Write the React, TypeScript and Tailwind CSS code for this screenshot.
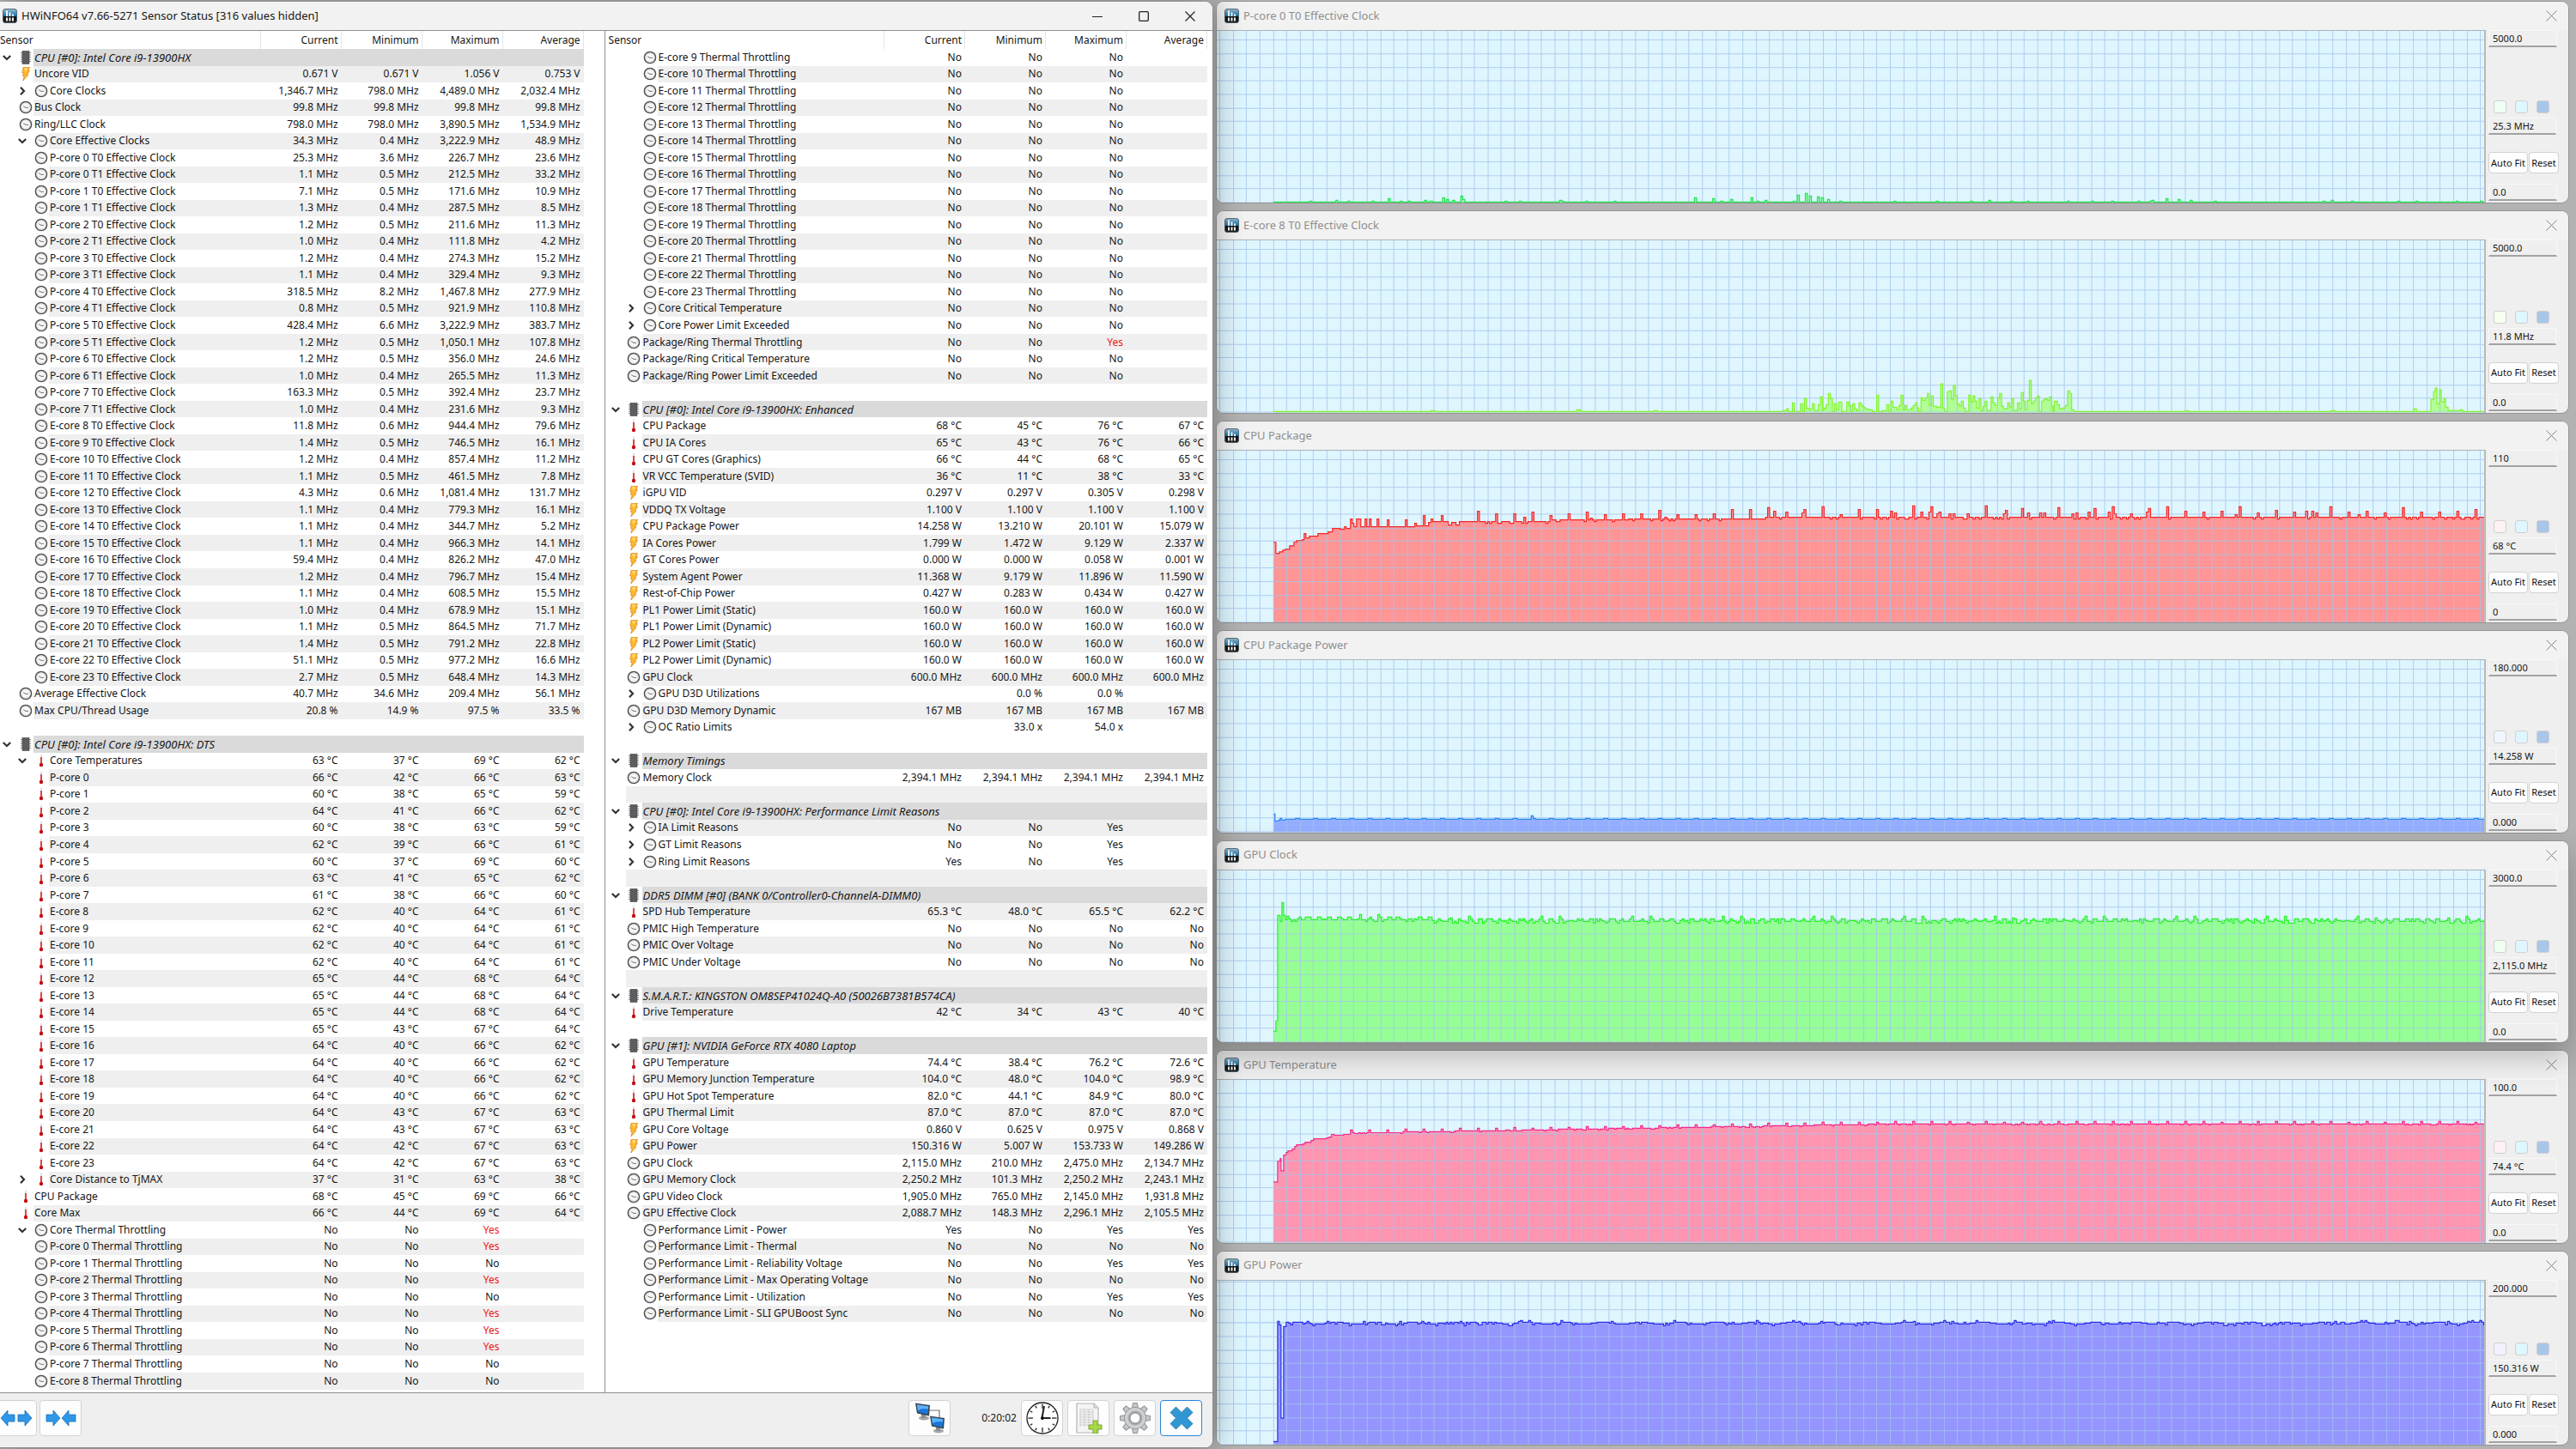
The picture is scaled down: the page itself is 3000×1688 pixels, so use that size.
import clsx from "clsx";
import type { ReactNode } from "react";

type IconName = "chip" | "bolt" | "clock" | "temp";
type RowKind = "group" | "item" | "open" | "closed" | "sub" | "blank";

interface Row {
    kind: RowKind;
    icon: IconName;
    name: string;
    values: string[];
    shaded?: boolean;
}

const row = (kind: RowKind, icon: IconName, name: string, values = "", unit = "", shaded?: boolean): Row => ({
    kind,
    icon,
    name,
    values: values ? values.split(" ").map((v) => (v === "-" ? "" : unit ? `${v} ${unit}` : v)) : [],
    shaded,
});

const group = (name: string) => row("group", "chip", name);
const blank = (shaded?: boolean) => row("blank", "chip", "", "", "", shaded);

const effectiveClocks = [
    "25.3 3.6 226.7 23.6",
    "1.1 0.5 212.5 33.2",
    "7.1 0.5 171.6 10.9",
    "1.3 0.4 287.5 8.5",
    "1.2 0.5 211.6 11.3",
    "1.0 0.4 111.8 4.2",
    "1.2 0.4 274.3 15.2",
    "1.1 0.4 329.4 9.3",
    "318.5 8.2 1,467.8 277.9",
    "0.8 0.5 921.9 110.8",
    "428.4 6.6 3,222.9 383.7",
    "1.2 0.5 1,050.1 107.8",
    "1.2 0.5 356.0 24.6",
    "1.0 0.4 265.5 11.3",
    "163.3 0.5 392.4 23.7",
    "1.0 0.4 231.6 9.3",
].map((values, i) => row("sub", "clock", `P-core ${Math.floor(i / 2)} T${i % 2} Effective Clock`, values, "MHz"));

const eCoreClocks = [
    "11.8 0.6 944.4 79.6",
    "1.4 0.5 746.5 16.1",
    "1.2 0.4 857.4 11.2",
    "1.1 0.5 461.5 7.8",
    "4.3 0.6 1,081.4 131.7",
    "1.1 0.4 779.3 16.1",
    "1.1 0.4 344.7 5.2",
    "1.1 0.4 966.3 14.1",
    "59.4 0.4 826.2 47.0",
    "1.2 0.4 796.7 15.4",
    "1.1 0.4 608.5 15.5",
    "1.0 0.4 678.9 15.1",
    "1.1 0.5 864.5 71.7",
    "1.4 0.5 791.2 22.8",
    "51.1 0.5 977.2 16.6",
    "2.7 0.5 648.4 14.3",
].map((values, i) => row("sub", "clock", `E-core ${i + 8} T0 Effective Clock`, values, "MHz"));

const coreTemps = [
    "66 42 66 63",
    "60 38 65 59",
    "64 41 66 62",
    "60 38 63 59",
    "62 39 66 61",
    "60 37 69 60",
    "63 41 65 62",
    "61 38 66 60",
    "62 40 64 61",
    "62 40 64 61",
    "62 40 64 61",
    "62 40 64 61",
    "65 44 68 64",
    "65 44 68 64",
    "65 44 68 64",
    "65 43 67 64",
    "64 40 66 62",
    "64 40 66 62",
    "64 40 66 62",
    "64 40 66 62",
    "64 43 67 63",
    "64 43 67 63",
    "64 42 67 63",
    "64 42 67 63",
].map((values, i) => row("sub", "temp", `${i < 8 ? "P" : "E"}-core ${i}`, values, "°C"));

const hotCores = [0, 2, 4, 5, 6];

const leftRows: Row[] = [
    group("CPU [#0]: Intel Core i9-13900HX"),
    row("item", "bolt", "Uncore VID", "0.671 0.671 1.056 0.753", "V"),
    row("closed", "clock", "Core Clocks", "1,346.7 798.0 4,489.0 2,032.4", "MHz"),
    row("item", "clock", "Bus Clock", "99.8 99.8 99.8 99.8", "MHz"),
    row("item", "clock", "Ring/LLC Clock", "798.0 798.0 3,890.5 1,534.9", "MHz"),
    row("open", "clock", "Core Effective Clocks", "34.3 0.4 3,222.9 48.9", "MHz"),
    ...effectiveClocks,
    ...eCoreClocks,
    row("item", "clock", "Average Effective Clock", "40.7 34.6 209.4 56.1", "MHz"),
    row("item", "clock", "Max CPU/Thread Usage", "20.8 14.9 97.5 33.5", "%"),
    blank(),
    group("CPU [#0]: Intel Core i9-13900HX: DTS"),
    row("open", "temp", "Core Temperatures", "63 37 69 62", "°C"),
    ...coreTemps,
    row("closed", "temp", "Core Distance to TjMAX", "37 31 63 38", "°C"),
    row("item", "temp", "CPU Package", "68 45 69 66", "°C"),
    row("item", "temp", "Core Max", "66 44 69 64", "°C"),
    row("open", "clock", "Core Thermal Throttling", "No No Yes"),
    ...Array.from({ length: 9 }, (_, i) =>
        row("sub", "clock", `${i < 8 ? "P" : "E"}-core ${i} Thermal Throttling`, hotCores.includes(i) ? "No No Yes" : "No No No"),
    ),
];

const rightRows: Row[] = [
    ...Array.from({ length: 15 }, (_, i) => row("sub", "clock", `E-core ${i + 9} Thermal Throttling`, "No No No")),
    row("closed", "clock", "Core Critical Temperature", "No No No"),
    row("closed", "clock", "Core Power Limit Exceeded", "No No No"),
    row("item", "clock", "Package/Ring Thermal Throttling", "No No Yes"),
    row("item", "clock", "Package/Ring Critical Temperature", "No No No"),
    row("item", "clock", "Package/Ring Power Limit Exceeded", "No No No"),
    blank(),
    group("CPU [#0]: Intel Core i9-13900HX: Enhanced"),
    row("item", "temp", "CPU Package", "68 45 76 67", "°C"),
    row("item", "temp", "CPU IA Cores", "65 43 76 66", "°C"),
    row("item", "temp", "CPU GT Cores (Graphics)", "66 44 68 65", "°C"),
    row("item", "temp", "VR VCC Temperature (SVID)", "36 11 38 33", "°C"),
    row("item", "bolt", "iGPU VID", "0.297 0.297 0.305 0.298", "V"),
    row("item", "bolt", "VDDQ TX Voltage", "1.100 1.100 1.100 1.100", "V"),
    row("item", "bolt", "CPU Package Power", "14.258 13.210 20.101 15.079", "W"),
    row("item", "bolt", "IA Cores Power", "1.799 1.472 9.129 2.337", "W"),
    row("item", "bolt", "GT Cores Power", "0.000 0.000 0.058 0.001", "W"),
    row("item", "bolt", "System Agent Power", "11.368 9.179 11.896 11.590", "W"),
    row("item", "bolt", "Rest-of-Chip Power", "0.427 0.283 0.434 0.427", "W"),
    row("item", "bolt", "PL1 Power Limit (Static)", "160.0 160.0 160.0 160.0", "W"),
    row("item", "bolt", "PL1 Power Limit (Dynamic)", "160.0 160.0 160.0 160.0", "W"),
    row("item", "bolt", "PL2 Power Limit (Static)", "160.0 160.0 160.0 160.0", "W"),
    row("item", "bolt", "PL2 Power Limit (Dynamic)", "160.0 160.0 160.0 160.0", "W"),
    row("item", "clock", "GPU Clock", "600.0 600.0 600.0 600.0", "MHz"),
    row("closed", "clock", "GPU D3D Utilizations", "- 0.0 0.0 -", "%"),
    row("item", "clock", "GPU D3D Memory Dynamic", "167 167 167 167", "MB"),
    row("closed", "clock", "OC Ratio Limits", "- 33.0 54.0 -", "x"),
    blank(false),
    group("Memory Timings"),
    row("item", "clock", "Memory Clock", "2,394.1 2,394.1 2,394.1 2,394.1", "MHz", false),
    blank(true),
    group("CPU [#0]: Intel Core i9-13900HX: Performance Limit Reasons"),
    row("closed", "clock", "IA Limit Reasons", "No No Yes", "", true),
    row("closed", "clock", "GT Limit Reasons", "No No Yes", "", false),
    row("closed", "clock", "Ring Limit Reasons", "Yes No Yes"),
    blank(),
    group("DDR5 DIMM [#0] (BANK 0/Controller0-ChannelA-DIMM0)"),
    row("item", "temp", "SPD Hub Temperature", "65.3 48.0 65.5 62.2", "°C"),
    row("item", "clock", "PMIC High Temperature", "No No No No"),
    row("item", "clock", "PMIC Over Voltage", "No No No No"),
    row("item", "clock", "PMIC Under Voltage", "No No No No"),
    blank(),
    group("S.M.A.R.T.: KINGSTON OM8SEP41024Q-A0 (50026B7381B574CA)"),
    row("item", "temp", "Drive Temperature", "42 34 43 40", "°C"),
    blank(),
    group("GPU [#1]: NVIDIA GeForce RTX 4080 Laptop"),
    row("item", "temp", "GPU Temperature", "74.4 38.4 76.2 72.6", "°C"),
    row("item", "temp", "GPU Memory Junction Temperature", "104.0 48.0 104.0 98.9", "°C"),
    row("item", "temp", "GPU Hot Spot Temperature", "82.0 44.1 84.9 80.0", "°C"),
    row("item", "temp", "GPU Thermal Limit", "87.0 87.0 87.0 87.0", "°C"),
    row("item", "bolt", "GPU Core Voltage", "0.860 0.625 0.975 0.868", "V"),
    row("item", "bolt", "GPU Power", "150.316 5.007 153.733 149.286", "W"),
    row("item", "clock", "GPU Clock", "2,115.0 210.0 2,475.0 2,134.7", "MHz"),
    row("item", "clock", "GPU Memory Clock", "2,250.2 101.3 2,250.2 2,243.1", "MHz"),
    row("item", "clock", "GPU Video Clock", "1,905.0 765.0 2,145.0 1,931.8", "MHz"),
    row("item", "clock", "GPU Effective Clock", "2,088.7 148.3 2,296.1 2,105.5", "MHz"),
    row("sub", "clock", "Performance Limit - Power", "Yes No Yes Yes"),
    row("sub", "clock", "Performance Limit - Thermal", "No No No No"),
    row("sub", "clock", "Performance Limit - Reliability Voltage", "No No Yes Yes"),
    row("sub", "clock", "Performance Limit - Max Operating Voltage", "No No No No"),
    row("sub", "clock", "Performance Limit - Utilization", "No No Yes Yes"),
    row("sub", "clock", "Performance Limit - SLI GPUBoost Sync", "No No No No"),
    blank(false),
    blank(false),
    blank(false),
    blank(false),
];

const SensorIcon = ({ name }: { name: IconName }) => {
    if (name === "chip") {
        return (
            <svg viewBox="0 0 16 16" className="mx-auto block size-4">
                <path d="M2 2.5h12M2 5h12M2 7.5h12M2 10h12M2 12.5h12" stroke="#8a8a8a" strokeWidth="1" />
                <rect x="4" y="0.5" width="8" height="15" fill="#5c5d60" stroke="#444" strokeWidth="0.6" />
            </svg>
        );
    }
    if (name === "bolt") {
        return (
            <svg viewBox="0 0 16 16" className="mx-auto block size-4">
                <path d="M5 0.5 12.5 0 11 4.5h1.5L9.5 9.5h1.3L4.8 16l1.5-5.5H4.5L5.5 7H3.8z" fill="#fdb92a" stroke="#e08a2c" strokeWidth="0.8" />
                <path d="M6 1.5 10 1.2 8 6z" fill="#ffe27a" />
            </svg>
        );
    }
    if (name === "temp") {
        return (
            <svg viewBox="0 0 16 16" className="mx-auto block size-4">
                <rect x="6.8" y="0.5" width="2.4" height="13" rx="1.2" fill="#e4e4e4" />
                <rect x="7.2" y="4" width="1.6" height="8" fill="#e02020" />
                <circle cx="8" cy="13" r="2.2" fill="#c40d12" />
            </svg>
        );
    }
    return (
        <svg viewBox="0 0 16 16" className="mx-auto block size-4">
            <circle cx="8" cy="8" r="6.6" fill="#f0f0f0" stroke="#505050" strokeWidth="1.5" />
            <circle cx="8" cy="8" r="5.2" fill="#f6f6f6" stroke="#cfcfcf" strokeWidth="0.7" />
            <path d="M5.2 6.8 8 8.4h3" fill="none" stroke="#775" strokeWidth="1" />
        </svg>
    );
};

const Toggle = ({ open, label, className }: { open: boolean; label: string; className: string }) => (
    <button type="button" aria-label={label} aria-expanded={open} className={clsx("block", className)}>
        <svg viewBox="0 0 10 10" className="size-[10px]" fill="none" stroke="#333" strokeWidth="2.2">
            <path d={open ? "M0.8 3 5 7 9.2 3" : "M3 0.8 7 5 3 9.2"} />
        </svg>
    </button>
);

const SensorTable = ({ rows }: { rows: Row[] }) => (
    <table className="h-full w-full table-fixed border-separate border-spacing-0 text-left leading-4 whitespace-nowrap">
        <colgroup>
            <col className="w-5" />
            <col className="w-[19px]" />
            <col className="w-[18px]" />
            <col />
            <col className="w-[94px]" />
            <col className="w-[94px]" />
            <col className="w-[94px]" />
            <col className="w-[94px]" />
        </colgroup>
        <thead>
            <tr>
                <th colSpan={4} className="h-[21px] border-r border-[#e5e5e5] p-0 font-normal">
                    Sensor
                </th>
                {["Current", "Minimum", "Maximum", "Average"].map((title) => (
                    <th key={title} className="border-r border-[#e5e5e5] p-0 pr-[3px] text-right font-normal">
                        {title}
                    </th>
                ))}
            </tr>
        </thead>
        <tbody>
            {rows.map((r, i) => {
                const nested = r.kind === "sub" || r.kind === "open" || r.kind === "closed";
                const shade = r.kind === "group" ? "bg-[#dadada]" : (r.shaded ?? i % 2 === 1) ? "bg-[#efefef]" : "";
                if (r.kind === "blank") {
                    return (
                        <tr key={i}>
                            <td className="p-0">&nbsp;</td>
                            <td colSpan={7} className={clsx("p-0", shade)} />
                        </tr>
                    );
                }
                return (
                    <tr key={i}>
                        <td className="p-0">{r.kind === "group" && <Toggle open label={r.name} className="ml-[3px]" />}</td>
                        {nested && (
                            <td className="p-0">
                                {r.kind !== "sub" && <Toggle open={r.kind === "open"} label={r.name} className="ml-px" />}
                            </td>
                        )}
                        <td className="p-0">
                            <SensorIcon name={r.icon} />
                        </td>
                        <td colSpan={nested ? 1 : 2} className={clsx("p-0 pl-px", shade, r.kind === "group" && "text-[13px] italic")}>
                            {r.name}
                        </td>
                        {[0, 1, 2, 3].map((col) => (
                            <td
                                key={col}
                                className={clsx(
                                    "p-0 pr-1 text-right",
                                    shade,
                                    col === 2 && r.values[col] === "Yes" && r.name.includes("Throttling") && "text-[#f01414]",
                                )}
                            >
                                {r.values[col]}
                            </td>
                        ))}
                    </tr>
                );
            })}
        </tbody>
    </table>
);

const AppIcon = () => (
    <svg viewBox="0 0 17 17" className="size-[17px] shrink-0">
        <defs>
            <linearGradient id="app-icon" x1="0" y1="0" x2="0" y2="1">
                <stop offset="0" stopColor="#9cbccd" />
                <stop offset="0.5" stopColor="#1273ab" />
                <stop offset="0.55" stopColor="#111" />
                <stop offset="1" stopColor="#222" />
            </linearGradient>
        </defs>
        <rect x="0.5" y="0.5" width="16" height="16" rx="2.5" fill="url(#app-icon)" stroke="#3d5563" strokeWidth="0.8" />
        <path d="M5 2.5v6.5M8.5 4.5v4.5M12 6.5v2.5M5 10.5v4M8.5 10.5v4M12 10.5v4" stroke="#fff" strokeWidth="1.9" />
    </svg>
);

const ToolButton = ({ label, className, children }: { label: string; className?: string; children: ReactNode }) => (
    <button
        type="button"
        aria-label={label}
        className={clsx("flex h-[42px] w-[49px] items-center justify-center rounded border bg-[#fdfdfd]", className ?? "border-[#d2d2d2]")}
    >
        {children}
    </button>
);

const ArrowPair = ({ outward }: { outward: boolean }) => (
    <svg viewBox="0 0 38 20" className="h-5 w-[38px]" fill="#2f97e8" stroke="#1b6fb8" strokeWidth="0.8">
        {outward ? (
            <>
                <path d="M1 10 9 1v5h8v8H9v5z" />
                <path d="M37 10 29 1v5h-8v8h8v5z" />
            </>
        ) : (
            <>
                <path d="M18 10 10 1v5H2v8h8v5z" />
                <path d="M20 10 28 1v5h8v8h-8v5z" />
            </>
        )}
    </svg>
);

const Monitor = ({ x, y }: { x: number; y: number }) => (
    <g transform={`translate(${x} ${y})`}>
        <ellipse cx="11" cy="18" rx="6" ry="2.5" fill="#a5a8ab" />
        <path d="M8 13h5v5H8z" fill="#8b8f93" />
        <path d="M1 0.5 18 3 17 15.5 3 12.5z" fill="#3b4248" />
        <path d="M2.8 2.2 16.3 4.2 15.5 13.7 4.4 11.3z" fill="#1976dc" />
        <path d="M2.8 2.2 16.3 4.2 16 7.5Q9 6 3.8 9z" fill="#5cb0f8" />
    </g>
);

const gearTeeth = Array.from({ length: 8 }, (_, i) => i * 45);
const clockTicks = Array.from({ length: 12 }, (_, i) => i * 30);

const Toolbar = () => (
    <footer className="flex h-16 shrink-0 items-start overflow-hidden border-t border-[#8f8f94] bg-[#efefef] pt-2 pr-3">
        <div className="-ml-1.5 flex gap-[3px]">
            <ToolButton label="Expand columns">
                <ArrowPair outward />
            </ToolButton>
            <ToolButton label="Shrink columns">
                <ArrowPair outward={false} />
            </ToolButton>
        </div>
        <div className="ml-auto flex items-center gap-[5px]">
            <ToolButton label="Remote monitoring">
                <svg viewBox="0 0 38 38" className="size-[38px]">
                    <path d="M18 10h12v8" fill="none" stroke="#777" strokeWidth="1.2" />
                    <Monitor x={1} y={1} />
                    <Monitor x={18} y={16} />
                </svg>
            </ToolButton>
            <time className="w-[72px] text-right">0:20:02</time>
            <ToolButton label="Reset clock">
                <svg viewBox="0 0 38 38" className="size-[38px]" fill="none" stroke="#222">
                    <circle cx="19" cy="19" r="18" fill="#fff" strokeWidth="1.3" />
                    {clockTicks.map((a) => (
                        <path key={a} d={a % 90 ? "M19 2.5v3" : "M19 2.5v5.5"} strokeWidth="1.3" transform={`rotate(${a} 19 19)`} />
                    ))}
                    <path d="M18.5 19 21 5M18 19h10.5" strokeWidth="2" />
                    <circle cx="19" cy="19" r="1.6" fill="#000" />
                </svg>
            </ToolButton>
            <ToolButton label="Log to file">
                <svg viewBox="0 0 34 36" className="h-9 w-[34px]">
                    <path d="M3 1h20l5 5v29H3z" fill="#f4f4f4" stroke="#b5b5b5" strokeWidth="1.2" />
                    <path d="M23 1v5h5" fill="#ddd" stroke="#b5b5b5" />
                    <path d="M7 8h15M7 11h15M7 14h15M7 17h15M7 20h15M7 23h15M7 26h12M7 8v20M12 8v20M17 8v18M22 8v15" stroke="#cdcdcd" strokeWidth="1" />
                    <path d="M22 21h5v5h5v5h-5v5h-5v-5h-5v-5h5z" fill="#a8d84a" stroke="#76a821" strokeWidth="1" />
                </svg>
            </ToolButton>
            <ToolButton label="Settings">
                <svg viewBox="0 0 38 38" className="size-[38px]">
                    <g fill="#c3c8ca" stroke="#8b9093" strokeWidth="1">
                        {gearTeeth.map((a) => (
                            <path key={a} d="M15.5 8 16.5 1.5h5L22.5 8z" transform={`rotate(${a} 19 19)`} />
                        ))}
                        <circle cx="19" cy="19" r="12.5" />
                    </g>
                    <circle cx="19" cy="19" r="12" fill="#cdd1d3" />
                    <circle cx="19" cy="19" r="8.5" fill="#a4a9ac" />
                    <circle cx="19" cy="19" r="6" fill="#fff" stroke="#898e91" />
                </svg>
            </ToolButton>
            <ToolButton label="Close sensors" className="border-[#2a86d6]">
                <svg viewBox="0 0 28 28" className="size-7">
                    <path d="M7.5 1 14 7.5 20.5 1 27 7.5 20.5 14 27 20.5 20.5 27 14 20.5 7.5 27 1 20.5 7.5 14 1 7.5z" fill="#3097d3" stroke="#1c71a8" strokeWidth="0.8" />
                </svg>
            </ToolButton>
        </div>
    </footer>
);

// A sample is [x, height above the baseline]; each one holds until the next.
type Sample = [number, number];

const CHART_WIDTH = 1478;
const START = 66;

const noise = (i: number, seed: number) => {
    const v = Math.sin(i * 12.9898 + seed * 78.233) * 43758.5453;
    return v - Math.floor(v);
};

const series = (from: number, seed: number, level: (x: number, n: number, i: number) => number): Sample[] => {
    const out: Sample[] = [];
    for (let i = 0; from + i * 2.35 < CHART_WIDTH; i++) {
        const x = from + i * 2.35;
        out.push([x, level(x, noise(i, seed), i)]);
    }
    return out;
};

const near = (x: number, points: Sample[]) => points.find(([px]) => Math.abs(px - x) < 1.2)?.[1];

const pCoreSpikes: Sample[] = [
    [138, 3], [199, 5], [242, 3], [264, 6], [268, 4], [276, 3], [284, 8], [287, 4], [400, 3], [556, 6], [578, 5], [600, 4], [622, 6], [640, 3],
    [676, 9], [686, 11], [692, 8], [700, 7], [706, 6], [712, 4], [900, 3], [1090, 3], [1108, 5], [1122, 4], [1136, 3], [1300, 3],
];

const eCoreBurst: Sample[] = (
    [
        [50, 2], [65, 4], [71, 1], [85, 11], [92, 1], [113, 10], [120, 1], [127, 16], [134, 5], [140, 4], [155, 10], [162, 2], [176, 9], [183, 18],
        [190, 3], [197, 5], [204, 9], [211, 22], [218, 16], [225, 1], [232, 10], [239, 3], [247, 12], [258, 1], [275, 12], [283, 8], [290, 1],
        [296, 10], [303, 4], [310, 2], [318, 11], [325, 8], [333, 6], [340, 4], [350, 3], [365, 1], [380, 20], [387, 1], [400, 2], [415, 9],
        [422, 1], [430, 13], [437, 6], [450, 3], [458, 8], [465, 20], [472, 3], [479, 8], [486, 3], [500, 5], [508, 8], [515, 11], [522, 5],
        [527, 1], [535, 17], [542, 14], [550, 17], [557, 22], [564, 8], [571, 19], [578, 7], [590, 6], [604, 33], [611, 5], [618, 1], [627, 24],
        [634, 25], [641, 15], [648, 31], [655, 19], [662, 10], [669, 7], [676, 13], [683, 5], [690, 1], [702, 20], [709, 12], [716, 19],
        [723, 13], [730, 5], [738, 16], [745, 2], [752, 7], [759, 13], [766, 2], [780, 18], [787, 11], [794, 8], [803, 17], [810, 22], [817, 7],
        [824, 4], [838, 11], [845, 6], [852, 16], [859, 2], [872, 11], [879, 4], [886, 23], [893, 13], [900, 3], [907, 14], [914, 37], [921, 10],
        [928, 13], [935, 17], [942, 19], [949, 1], [957, 13], [964, 15], [971, 16], [978, 14], [985, 18], [992, 7], [997, 1], [1001, 13],
        [1012, 9], [1020, 4], [1030, 5], [1040, 8], [1048, 25], [1055, 22], [1062, 3], [1070, 1],
    ] as Sample[]
).map(([x, h]) => [643 + x / 3, h]);

const charts = {
    pCore: series(START, 1, (x, n) => near(x, pCoreSpikes) ?? (n > 0.95 ? 2 : 1)),
    eCore: [
        [START, 1], [250, 2], [254, 1], [420, 3], [424, 1], [510, 2], [514, 1],
        ...eCoreBurst,
        [1130, 2], [1133, 1], [1300, 2], [1304, 1], [1396, 4], [1399, 1], [1416, 15], [1419, 24], [1421, 28], [1423, 10], [1426, 26], [1428, 12],
        [1431, 16], [1433, 6], [1436, 2], [1450, 3], [1453, 1],
    ] as Sample[],
    package: [
        [66, 93], [69, 80], [73, 82], [77, 84], [80, 85], [85, 89], [90, 93], [93, 95], [100, 96], [102, 103], [104, 98], [108, 100], [118, 103],
        [130, 105], [135, 109], [144, 108], [149, 111], [151, 109], [156, 120], [158, 115], [160, 111], [163, 120], [168, 111], [173, 120],
        [175, 111], [178, 120], [180, 111], [187, 120], [189, 111], [199, 119], [201, 111], [220, 119], [222, 111], [231, 115], [233, 112],
        [241, 124], [243, 112], [247, 116], [250, 120], [252, 117], [262, 124], [264, 117], [270, 113], [274, 116], [279, 113], [283, 117],
        ...series(297, 3, (x, n, i) => {
            const base = x < 390 ? 117 : x < 480 ? 119 : x < 640 ? 120 : 122;
            if (i % 9 === 3) return base + 3 + Math.round(n * 10);
            if (n > (x > 640 && x < 1020 ? 0.9 : 0.96)) return base + 2 + Math.round(noise(i, 9) * 6);
            return n < 0.15 ? base - 2 : base;
        }),
    ] as Sample[],
    packagePower: [
        [66, 21], [68, 13], [72, 14], [74, 16], [76, 14],
        ...series(80, 4, (x, _n, i) => near(x, [[367, 19]]) ?? (i % 9 === 5 || i % 9 === 6 ? 16 : 15)),
    ] as Sample[],
    gpuClock: [
        [66, 13], [69, 25], [71, 147], [74, 140], [76, 162], [78, 147], [80, 142],
        ...series(82, 5, (x, n, i) => (x < 250 ? 142 : 140) + (i % 5 < 2 ? 3 : 0) + (i % 9 === 0 ? 3 : 0) - (n < 0.3 ? 2 : 0)),
    ] as Sample[],
    gpuTemp: [
        [66, 70], [71, 94], [74, 97], [75, 83], [78, 101], [81, 104], [83, 106], [88, 108], [91, 111], [93, 113], [100, 114], [103, 116],
        [110, 118], [113, 120], [128, 121], [131, 122], [134, 125], [137, 124], [148, 125],
        ...series(156, 6, (x, n, i) => {
            const base = 127 + Math.min(10, Math.floor((x - 156) / 60));
            return base + (i % 9 === 0 ? 3 : 0) - (n < 0.2 ? 1 : 0);
        }),
    ] as Sample[],
    gpuPower: [
        [66, 4], [71, 143], [73, 139], [75, 31], [78, 137], [81, 142],
        ...series(84, 7, (_x, n, i) => 141 + Math.round(Math.sin(i / 3)) + (n < 0.12 ? -2 : n > 0.92 ? 2 : 0)),
    ] as Sample[],
};

interface GraphProps {
    title: string;
    max: string;
    current: string;
    min: string;
    samples: Sample[];
    height: number;
    stroke: string;
    fill: string;
    swatch: string;
    className: string;
}

const graphs: GraphProps[] = [
    { title: "P-core 0 T0 Effective Clock", max: "5000.0", current: "25.3 MHz", min: "0.0", samples: charts.pCore, height: 199, stroke: "#1fe64e", fill: "#9bf7b4", swatch: "bg-[#f0fff4]", className: "grow-236" },
    { title: "E-core 8 T0 Effective Clock", max: "5000.0", current: "11.8 MHz", min: "0.0", samples: charts.eCore, height: 199, stroke: "#85f52a", fill: "#b0ff95", swatch: "bg-[#f6fff0]", className: "grow-236" },
    { title: "CPU Package", max: "110", current: "68 °C", min: "0", samples: charts.package, height: 199, stroke: "#f52626", fill: "#ff9595", swatch: "bg-[#fff2f2]", className: "grow-236" },
    { title: "CPU Package Power", max: "180.000", current: "14.258 W", min: "0.000", samples: charts.packagePower, height: 199, stroke: "#2a8af5", fill: "#95aeff", swatch: "bg-[#f0f6ff]", className: "grow-236" },
    { title: "GPU Clock", max: "3000.0", current: "2,115.0 MHz", min: "0.0", samples: charts.gpuClock, height: 199, stroke: "#26f526", fill: "#95ff95", swatch: "bg-[#f0fff0]", className: "relative z-10 grow-236 shadow-[0_16px_36px_rgba(0,0,0,0.25)]" },
    { title: "GPU Temperature", max: "100.0", current: "74.4 °C", min: "0.0", samples: charts.gpuTemp, height: 188, stroke: "#f52a8a", fill: "#ff95b0", swatch: "bg-[#fff0f6]", className: "grow-225" },
    { title: "GPU Power", max: "200.000", current: "150.316 W", min: "0.000", samples: charts.gpuPower, height: 190, stroke: "#2a2aee", fill: "#9595ff", swatch: "bg-[#f2f2ff]", className: "grow-227" },
];

const GRID = 15.64;

const GraphPlot = ({ samples, height, stroke, fill }: Pick<GraphProps, "samples" | "height" | "stroke" | "fill">) => {
    const steps = samples.map(([x, h], i) => `${i ? "H" : "M"}${x.toFixed(1)}${i ? "V" : " "}${height - h}`).join("") + `H${CHART_WIDTH}`;
    const columns = Array.from({ length: 95 }, (_, i) => `M${Math.round(3 + i * GRID) + 0.5} 0V${height}`).join("");
    const lines = Array.from({ length: 13 }, (_, i) => `M0 ${Math.round(height - i * GRID) - 0.5}H${CHART_WIDTH}`).join("");

    return (
        <svg viewBox={`0 0 ${CHART_WIDTH} ${height}`} preserveAspectRatio="none" className="absolute inset-0 size-full">
            <path d={`${steps}V${height}H${START}z`} fill={fill} />
            <path d={columns + lines} stroke="#a4c4ea" strokeOpacity="0.8" fill="none" />
            <path d={steps} stroke={stroke} fill="none" strokeWidth="1.2" />
        </svg>
    );
};

const fieldClass = "h-5 border border-b-2 border-[#f8f8f8] border-b-[#a2a2a2] bg-[#efefef] px-1 text-[11px]";

const GraphWindow = ({ title, max, current, min, samples, height, stroke, fill, swatch, className }: GraphProps) => (
    <section className={clsx("flex basis-0 flex-col overflow-hidden rounded-[9px] border border-[#949494] bg-[#efefef]", className)}>
        <header className="flex h-[33px] shrink-0 items-center bg-[#f2f2f2] pl-[9px] text-[13px] text-[#8e8e8e]">
            <AppIcon />
            <h2 className="ml-[5px]">{title}</h2>
            <button type="button" aria-label={`Close ${title}`} className="mr-[13px] ml-auto">
                <svg viewBox="0 0 13 13" className="size-[13px]" stroke="#858585">
                    <path d="M0.5 0.5 12.5 12.5M12.5 0.5 0.5 12.5" />
                </svg>
            </button>
        </header>
        <div className="flex min-h-0 flex-1">
            <div className="relative flex-1 border-t border-r-2 border-t-[#a9b4bb] border-r-[#b9b9b9] bg-[#dff6ff]">
                <GraphPlot samples={samples} height={height} stroke={stroke} fill={fill} />
            </div>
            <aside className="flex w-[96px] flex-col items-start pb-0.5 pl-[3px]">
                <input aria-label={`${title} maximum`} defaultValue={max} className={clsx(fieldClass, "w-20")} />
                <div className="mt-auto mb-[5px] ml-[6px] flex gap-[10px]">
                    <button type="button" aria-label="Graph color" className={clsx("size-[15px] rounded-[3px] border border-[#d0d0d0]", swatch)} />
                    <button type="button" aria-label="Background color" className="size-[15px] rounded-[3px] border border-[#d0d0d0] bg-[#dff6ff]" />
                    <button type="button" aria-label="Grid color" className="size-[15px] rounded-[3px] border border-[#d0d0d0] bg-[#a9c5ea]" />
                </div>
                <input aria-label={`${title} current`} readOnly value={current} className={clsx(fieldClass, "w-[79px]")} />
                <div className="mt-5 mb-3 flex gap-px text-[11px] text-[#111]">
                    <button type="button" className="h-[25px] w-[46px] rounded border border-[#d2d2d2] bg-[#fdfdfd] whitespace-nowrap">
                        Auto Fit
                    </button>
                    <button type="button" className="h-[25px] w-[35px] rounded border border-[#d2d2d2] bg-[#fdfdfd]">
                        Reset
                    </button>
                </div>
                <input aria-label={`${title} minimum`} defaultValue={min} className={clsx(fieldClass, "w-20")} />
            </aside>
        </div>
    </section>
);

export default function App() {
    return (
        <div className="flex h-screen overflow-hidden bg-[#b4b4b4] font-['Noto_Sans','DejaVu_Sans',sans-serif] text-[12px] text-[#151515]">
            <main className="relative z-20 mt-0.5 mb-px flex w-[47.1%] flex-col overflow-hidden rounded-r-[9px] border-r border-b border-[#8a8a8a] bg-white shadow-[0_0_36px_rgba(0,0,0,0.38)]">
                <header className="flex h-[34px] shrink-0 items-center border-b border-[#8f8f94] bg-[#f2f2f2] pl-[3px]">
                    <AppIcon />
                    <h1 className="ml-[5px] text-[13px]">HWiNFO64 v7.66-5271 Sensor Status [316 values hidden]</h1>
                    <div className="mr-5 ml-auto flex items-center gap-[42px] text-[#222]">
                        <button type="button" aria-label="Minimize">
                            <svg viewBox="0 0 12 12" className="size-3" stroke="currentColor">
                                <path d="M0 6.5h12" />
                            </svg>
                        </button>
                        <button type="button" aria-label="Maximize">
                            <svg viewBox="0 0 12 12" className="size-3" fill="none" stroke="currentColor">
                                <rect x="0.7" y="0.7" width="10.6" height="10.6" rx="1" strokeWidth="1.3" />
                            </svg>
                        </button>
                        <button type="button" aria-label="Close">
                            <svg viewBox="0 0 12 12" className="size-3" stroke="currentColor" strokeWidth="1.2">
                                <path d="M0.5 0.5 11.5 11.5M11.5 0.5 0.5 11.5" />
                            </svg>
                        </button>
                    </div>
                </header>
                <div className="flex min-h-0 flex-1">
                    <div className="w-[49.9%] border-r border-[#8f8f94] pr-6 pb-[3px]">
                        <SensorTable rows={leftRows} />
                    </div>
                    <div className="min-w-0 flex-1 pr-1.5 pb-[3px] pl-1">
                        <SensorTable rows={rightRows} />
                    </div>
                </div>
                <Toolbar />
            </main>
            <div className="flex min-w-0 flex-1 flex-col gap-2 bg-[#b2b2b2] pt-px pr-2 pb-1 pl-[3px]">
                {graphs.map((graph) => (
                    <GraphWindow key={graph.title} {...graph} />
                ))}
            </div>
        </div>
    );
}
